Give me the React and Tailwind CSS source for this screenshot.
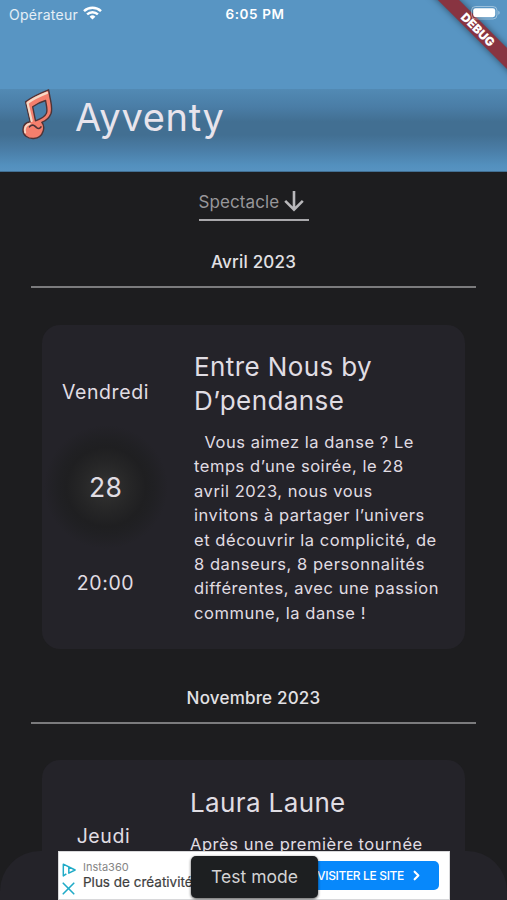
import { ChevronRight, X } from 'lucide-react';

const events = [
  {
    month: 'Avril 2023',
    day: 'Vendredi',
    date: '28',
    hour: '20:00',
    title: 'Entre Nous by D’pendanse',
    text: '\u00a0\u00a0Vous aimez la danse ? Le temps d’une soirée, le 28 avril 2023, nous vous invitons à partager l’univers et découvrir la complicité, de 8 danseurs, 8 personnalités différentes, avec une passion commune, la danse !',
  },
];

function StatusBar() {
  return (
    <div className="grid h-[28px] grid-cols-3 items-center pl-[9px] pr-[6px] text-[13.5px] text-white">
      <div className="flex items-center gap-[5px] text-white/85">
        <span className="text-[14px] tracking-[0.25px]">Opérateur</span>
        <svg className="-mt-[2px]" width="19" height="14" viewBox="0 0 19 14" fill="none" stroke="white" strokeWidth="2.5">
          <path d="M1 5.2a12.3 12.3 0 0 1 17 0" />
          <path d="M4.1 8.4a7.8 7.8 0 0 1 10.8 0" />
          <path d="M9.5 13.6 6.6 10.7a4.2 4.2 0 0 1 5.8 0z" fill="white" stroke="none" />
        </svg>
      </div>
      <span className="text-center font-semibold tracking-[0.6px]">6:05 PM</span>
      <svg className="relative z-10 -mt-[2px] justify-self-end" width="30" height="14" viewBox="0 0 30 14">
        <rect x="0.5" y="0.5" width="25.5" height="12.5" rx="4" fill="none" stroke="white" strokeOpacity="0.4" />
        <rect x="2.2" y="2.2" width="22" height="9" rx="2.4" fill="white" />
        <path d="M27.4 4.8c1.6.6 1.6 3.4 0 4z" fill="white" fillOpacity="0.5" />
      </svg>
    </div>
  );
}

function Note() {
  return (
    <svg width="32" height="51" viewBox="0 0 32 51" strokeLinejoin="round" strokeLinecap="round">
      <path
        d="M3.6 12.8C10 7.6 18 4.2 26.6.8c.8 4 1 6.500 2 10.500 1 5 1.800 9 .4 13.200-1.600 4.300-5 7.200-9.200 8.800 2 2.300 2.400 5.500 1.400 8.700-1.300 4.300-5 7.200-9.500 7.500C5.500 49.800.9 45.900.9 40.900c0-4.400 3-7.400 7.300-8.100z"
        fill="#f47f6d" stroke="#4c3438" strokeWidth="1.4"
      />
      <path d="M5.7 13.900C11.5 9.400 18 6.600 24.900 3.900" fill="none" stroke="#f6d9c6" strokeWidth="2.3" />
      <path d="M5.600 14.500 9.700 32" fill="none" stroke="#f6d9c6" strokeWidth="2.2" />
      <path d="M10.700 17.800c3.900-3 8.400-5 12.900-6.300.5 4.200 2.300 9.300.8 12.800-1.600 3.500-6.500 6-10.900 7.500z" fill="#4b80a9" stroke="#4c3438" strokeWidth="1.4" />
      <path d="M3.200 43.500c-1.200-4.500.8-8 4.600-8.800" fill="none" stroke="#f6d9c6" strokeWidth="1.9" />
      <path d="M7.500 37.800c3.200-3.400 5.300-1 7.100.8 1.600 1.400 3.400 1.100 4.400-.7" fill="none" stroke="#4c3438" strokeWidth="1.6" />
    </svg>
  );
}

function Header() {
  return (
    <header className="flex h-[172px] flex-col border-b border-[#426f92] bg-[#5895c3]">
      <StatusBar />
      <div className="mt-[61px] flex flex-1 items-start bg-[linear-gradient(180deg,#528ab4_0%,#4a7da6_22%,#426f92_40%,#426f92_56%,#4a7da6_74%,#5390be_93%,#5793c1_100%)] pl-[22px]">
        <Note />
        <h1 className="ml-[21px] mt-[3px] text-[38px] leading-[50px] tracking-[0.7px] text-[#e8e4ec]">Ayventy</h1>
      </div>
    </header>
  );
}

function Month({ children }) {
  return (
    <div className="mx-[31px] h-[38px] border-b-2 border-[#7b7b7d] pt-px text-center text-[17px] font-medium leading-[22px] tracking-[0.2px] text-[#e2e1e4]">
      {children}
    </div>
  );
}

function EventCard({ event }) {
  return (
    <article className="mx-[42px] mt-[37px] flex h-[324px] rounded-[18px] bg-[#242329] text-[#e0dde3]">
      <div className="flex w-[127px] flex-col items-center text-[19.5px] leading-[28px] tracking-[0.6px]">
        <span className="mt-[53px]">{event.day}</span>
        <div className="my-[19px] flex size-[124px] items-center justify-center rounded-full bg-[radial-gradient(closest-side,#333333_0%,#2c2c2c_20%,#252526_42%,#1f1f21_64%,#202023_76%,#242329_100%)] text-[26.5px] tracking-[0.2px]">
          {event.date}
        </div>
        <span className="mt-px">{event.hour}</span>
      </div>
      <div className="ml-[25px] w-[248px] pt-[25px]">
        <h2 className="text-[26px] leading-[34px] tracking-[0.4px]">{event.title}</h2>
        <p className="mt-[12px] text-[16.5px] leading-[24.4px] tracking-[0.55px]">{event.text}</p>
      </div>
    </article>
  );
}

function AdBanner() {
  return (
    <div className="absolute left-[58px] top-[851px] flex h-[49px] w-[392px] border border-[#d8d8da] bg-white">
      <div className="flex w-[19px] flex-col items-center pt-[11px]">
        <svg width="16" height="16" viewBox="0 0 16 16" fill="none" stroke="#20abc7" strokeWidth="1.7" strokeLinejoin="round">
          <path d="M5 12.300 1.500 14.700V1.300L15 8 7.800 11.600V5" />
        </svg>
        <X size={21} strokeWidth={1.9} className="mt-px shrink-0 text-[#20abc7]" />
      </div>
      <div className="ml-[5px] w-[112px] overflow-hidden whitespace-nowrap pt-[8px]">
        <p className="text-[11px] leading-[14px] text-[#858585]">Insta360</p>
        <p className="text-[13.5px] leading-[17px] text-[#3e3e3e] [-webkit-text-stroke:0.2px]">Plus de créativité</p>
      </div>
      <div className="ml-[112px] mt-[9px] flex h-[29px] w-[132px] items-center justify-end rounded-[5px] bg-[#0788fb] pr-[15px] text-white">
        <span className="whitespace-nowrap text-[12px] font-medium tracking-[-0.35px]">VISITER LE SITE</span>
        <ChevronRight size={15} strokeWidth={3.4} className="ml-[5px]" />
      </div>
    </div>
  );
}

export default function App() {
  return (
    <div className="relative h-[900px] w-[507px] overflow-hidden bg-[#1d1d1f] font-['Inter',sans-serif]">
      <Header />
      <div className="mx-auto mt-[18px] flex h-[31px] w-[110px] items-start border-b-2 border-[#a9a8ab]">
        <span className="text-[17px] leading-[24px] tracking-[0.1px] text-[#98979a]">Spectacle</span>
        <svg className="ml-[5px] mt-px shrink-0" width="20" height="21" viewBox="0 0 20 21" fill="none" stroke="#b9b8bb" strokeWidth="2.6">
          <path d="M10 0v18.500M1.200 9.800 10 18.600l8.800-8.800" />
        </svg>
      </div>

      <div className="mt-[29px]">
        <Month>{events[0].month}</Month>
        <EventCard event={events[0]} />
      </div>

      <div className="mt-[37px]">
        <Month>Novembre 2023</Month>
        <article className="mx-[42px] mt-[36px] flex h-[324px] rounded-[18px] bg-[#242329] text-[#e0dde3]">
          <div className="w-[123px] pt-[62px] text-center text-[19.5px] leading-[28px] tracking-[0.6px]">Jeudi</div>
          <div className="ml-[25px] w-[252px] pt-[26px]">
            <h2 className="text-[26px] leading-[34px] tracking-[0.37px]">Laura Laune</h2>
            <p className="mt-[12px] text-[16.5px] leading-[24.5px] tracking-[0.55px]">Après une première tournée</p>
          </div>
        </article>
      </div>

      {/* bottom bar and ad float over the list */}
      <div className="absolute left-0 top-[851px] h-[49px] w-full rounded-t-[40px] bg-[#242329]" />
      <AdBanner />
      <div className="absolute left-[191px] top-[856px] flex h-[42px] w-[127px] items-center justify-center rounded-[5px] bg-[#1d1f21] text-[17.5px] text-[#d3d3d4] shadow-[0_1px_3px_rgba(0,0,0,0.7)]">
        Test mode
      </div>

      <div className="absolute -right-[36px] top-[22px] flex h-[15px] w-[130px] rotate-45 items-center justify-center bg-[#883441] text-[12px] font-black text-white shadow-[0_0_7px_rgba(0,0,0,0.5)]">
        DEBUG
      </div>
    </div>
  );
}
